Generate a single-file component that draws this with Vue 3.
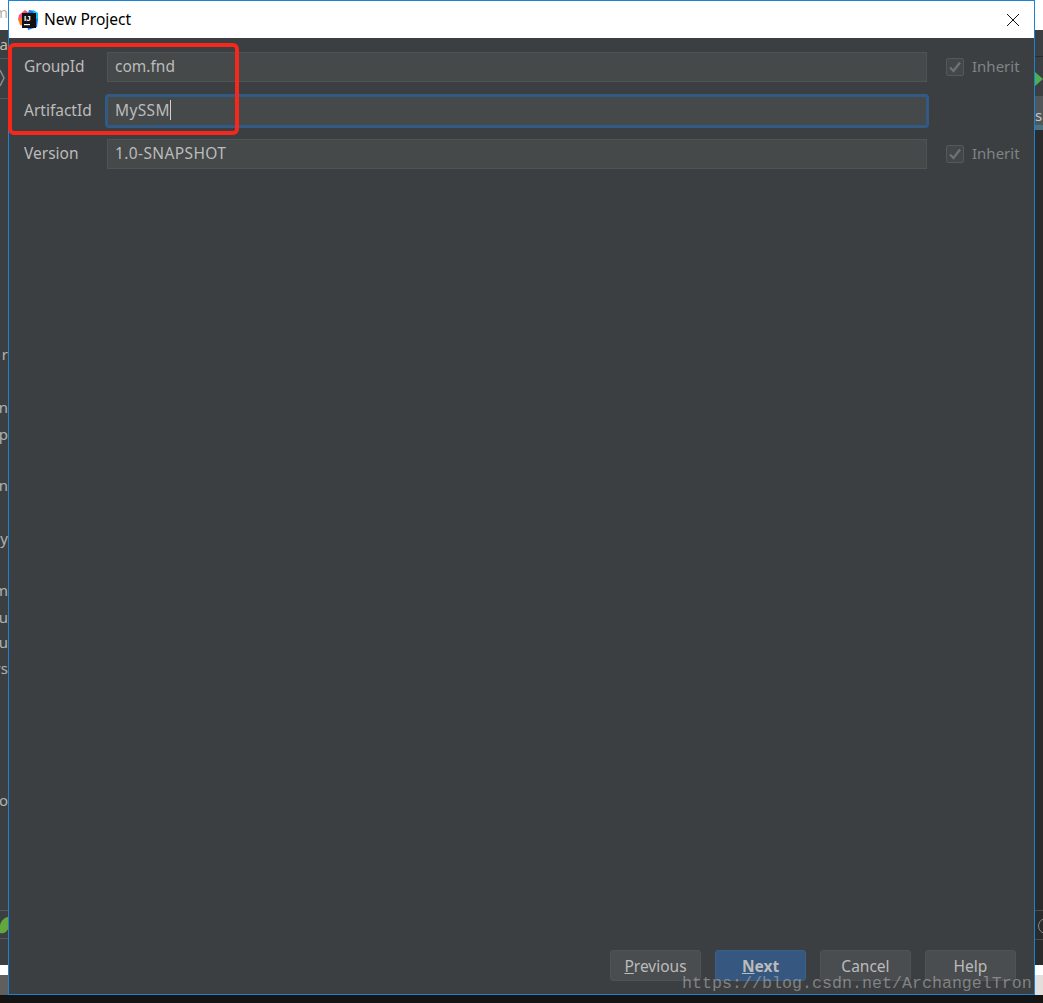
<script setup>
const leftBits = [
  { t: 'r', y: 344 }, { t: 'n', y: 397 }, { t: 'cp', y: 424 }, { t: 'n', y: 475 },
  { t: 'y', y: 528 }, { t: 'm', y: 580 }, { t: 'u', y: 607 }, { t: 'u', y: 632 },
  { t: 'rs', y: 658 }, { t: 'o', y: 790 },
]
const rows = [
  { label: 'GroupId', value: 'com.fnd', inherit: true },
  { label: 'ArtifactId', value: 'MySSM', focus: true, caps: true },
  { label: 'Version', value: '1.0-SNAPSHOT', inherit: true, caps: true },
]
</script>

<template>
  <div class="desk">
    <div class="bg-left">
      <div class="white-top"><span class="peek-m">m</span></div>
      <span class="bit peek-a">a</span>
      <div class="line l1"></div>
      <svg class="chev" width="8" height="20" viewBox="0 0 8 20"><path d="M0 2 L4 10 L0 18" fill="none" stroke="#8a8d8f" stroke-width="1.5"/></svg>
      <div class="line l2"></div>
      <span v-for="b in leftBits" :key="b.y" class="bit" :style="{ top: b.y + 'px' }">{{ b.t }}</span>
      <div class="line l3"></div>
      <svg class="leaf" width="8" height="18" viewBox="0 0 8 18"><path d="M0 16 C-2 6 3 1 8 0 L8 12 C6 16 3 17 0 16Z" fill="#62a83c"/></svg>
      <div class="line l4"></div>
      <div class="white-low"></div>
      <div class="gray-low"></div>
    </div>

    <div class="bg-right">
      <div class="white-top"></div>
      <div class="line r1"></div>
      <svg class="run" width="8" height="14" viewBox="0 0 8 14"><path d="M0 0 L8 7 L0 14Z" fill="#4caf50"/></svg>
      <div class="tab"><span class="tab-s">s</span></div>
      <div class="tab-bar"></div>
      <div class="line r2"></div>
      <div class="circle"></div>
      <div class="line r3"></div>
      <div class="white-low"></div>
      <div class="gray-low"></div>
    </div>

    <div class="dialog">
      <header class="titlebar">
        <svg class="logo" width="20" height="20" viewBox="0 0 20 20">
          <path d="M1 5 L7 0 L11 3 L5 12 L0 10Z" fill="#fc4f7c"/>
          <path d="M0 9 L6 8 L6 16 L2 15Z" fill="#f97a12"/>
          <path d="M11 0 L17 1 L20 9 L19 17 L10 20 L8 10Z" fill="#087cfa"/>
          <path d="M15 0 L20 3 L20 9 L15 8Z" fill="#07c3f2"/>
          <rect x="4" y="3" width="14" height="15" fill="#111"/>
          <text x="6" y="11" class="logo-t">IJ</text>
          <rect x="6" y="14" width="6" height="1.2" fill="#fff"/>
        </svg>
        <span class="title">New Project</span>
        <svg class="close" width="14" height="14" viewBox="0 0 14 14"><path d="M1 1 L13 13 M13 1 L1 13" stroke="#111" stroke-width="1" fill="none"/></svg>
      </header>

      <main class="body">
        <div class="form">
          <template v-for="r in rows" :key="r.label">
            <label class="lbl">{{ r.label }}</label>
            <div class="field" :class="{ focus: r.focus, caps: r.caps }">
              <span>{{ r.value }}</span><i v-if="r.focus" class="caret"></i>
            </div>
            <div v-if="r.inherit" class="inherit">
              <span class="box">
                <svg width="14" height="14" viewBox="0 0 14 14"><path d="M2 7.5 L5.5 11 L12 2.5" fill="none" stroke="#6e7173" stroke-width="2.4"/></svg>
              </span>
              <span>Inherit</span>
            </div>
            <div v-else></div>
          </template>
        </div>

        <footer class="buttons">
          <button class="btn"><u>P</u>revious</button>
          <button class="btn primary"><u>N</u>ext</button>
          <button class="btn">Cancel</button>
          <button class="btn">Help</button>
        </footer>
      </main>
    </div>

    <div class="annotation"></div>
    <div class="watermark">https://blog.csdn.net/ArchangelTron</div>
  </div>
</template>

<style>
html, body { margin: 0; background: #141414; }
</style>

<style scoped>
.desk {
  position: relative;
  width: 1043px;
  height: 1003px;
  overflow: hidden;
  background: #141414;
  font-family: "Noto Sans", "Open Sans", sans-serif;
}
.bg-left, .bg-right {
  position: absolute;
  top: 0;
  height: 995px;
  overflow: hidden;
  background: #3c3f41;
}
.bg-left { left: 0; width: 8px; }
.bg-right { left: 1035px; width: 8px; background: #2b2b2b; }
.white-top { position: absolute; left: 0; right: 0; top: 0; height: 30px; background: #fff; }
.peek-m { position: absolute; right: 0; top: 2px; color: #b9b4a8; font-size: 15px; line-height: 20px; }
.bit {
  position: absolute;
  right: 0;
  color: #b0b3b5;
  font-size: 15px;
  line-height: 20px;
}
.peek-a { top: 34px; color: #c4bda6; }
.line { position: absolute; left: 0; right: 0; height: 1px; background: #55585a; }
.l1 { top: 58px; } .l2 { top: 98px; } .l3 { top: 910px; } .l4 { top: 938px; }
.chev { position: absolute; left: 0; top: 68px; }
.leaf { position: absolute; left: 0; top: 917px; }
.white-low { position: absolute; left: 0; right: 0; top: 965px; height: 10px; background: #fff; }
.gray-low { position: absolute; left: 0; right: 0; top: 975px; height: 20px; background: #5f5f5f; }
.bg-right .gray-low { background: #e2dedc; }
.bg-right::before {
  content: "";
  position: absolute;
  left: 0; right: 0; top: 30px; height: 66px;
  background: #3c3f41;
}
.r1 { top: 56px; background: #2b2b2b; }
.run { position: absolute; left: 0; top: 72px; }
.tab { position: absolute; left: 0; right: 0; top: 96px; height: 29px; background: #515658; }
.tab-s { position: absolute; left: 0; top: 9px; color: #c8c8c8; font-size: 15px; line-height: 20px; }
.tab-bar { position: absolute; left: 0; right: 0; top: 125px; height: 5px; background: #4a7485; }
.r2 { top: 910px; background: #4a4c4e; }
.r3 { top: 939px; background: #4a4c4e; }
.circle {
  position: absolute;
  left: 3px; top: 918px;
  width: 14px; height: 14px;
  border: 1px solid #8a8a8a;
  border-radius: 50%;
}

.dialog {
  position: absolute;
  left: 8px;
  top: 0;
  width: 1025px;
  height: 993px;
  display: flex;
  flex-direction: column;
  border: 1px solid #1883d7;
  background: #3c3f41;
}
.titlebar {
  flex: none;
  height: 37px;
  display: flex;
  align-items: center;
  background: #fff;
  padding: 0 14px 0 9px;
}
.logo { flex: none; margin-right: 6px; }
.logo-t { font: 700 8px "Liberation Sans", sans-serif; fill: #fff; }
.title { flex: 1; font-size: 15.5px; color: #000; line-height: 20px; padding-bottom: 2px; }
.close { flex: none; }

.body {
  flex: 1;
  display: flex;
  flex-direction: column;
  padding: 14px 15px 13px;
}
.form {
  display: grid;
  grid-template-columns: 83px 820px 1fr;
  grid-template-rows: 30px 31px 30px;
  row-gap: 13px;
  align-items: center;
}
.lbl { font-size: 15.5px; color: #bbbbbb; line-height: 20px; padding-bottom: 2px; }
.field {
  height: 30px;
  box-sizing: border-box;
  align-self: end;
  display: flex;
  align-items: center;
  padding: 0 0 2px 7px;
  background: #45494a;
  border: 1px solid #505354;
  font-size: 15.5px;
  color: #bbbbbb;
}
.field.caps { letter-spacing: 0.38px; }
.field.focus {
  border-color: #2f5a85;
  box-shadow: 0 0 0 2px #335a82;
  border-radius: 2px;
}
.caret { display: inline-block; width: 1px; height: 20px; background: #cfcfcf; }
.inherit {
  display: flex;
  align-items: center;
  gap: 8px;
  padding-left: 19px;
  font-size: 15px;
  color: #808486;
}
.inherit span:last-child { padding-bottom: 2px; }
.box {
  width: 18px; height: 18px;
  box-sizing: border-box;
  display: flex;
  align-items: center;
  justify-content: center;
  background: #44474a;
  border: 1px solid #55585a;
  border-radius: 2px;
}
.buttons {
  margin-top: auto;
  display: flex;
  justify-content: flex-end;
  gap: 14px;
  padding-right: 3px;
}
.btn {
  width: 91px;
  height: 31px;
  padding: 2px 0 0;
  box-sizing: border-box;
  background: #4a4d4f;
  border: 1px solid #505355;
  border-radius: 3px;
  color: #bbbbbb;
  font-family: inherit;
  font-size: 15.5px;
  line-height: 1;
}
.primary {
  background: #365880;
  border-color: #3c5f86;
  font-weight: 700;
}

.annotation {
  position: absolute;
  left: 8px;
  top: 43px;
  width: 223px;
  height: 84px;
  border: 4px solid #f6281c;
  border-radius: 6px;
  pointer-events: none;
}
.watermark {
  position: absolute;
  left: 682px;
  top: 974px;
  font-family: "Liberation Mono", monospace;
  font-size: 16.67px;
  line-height: 20px;
  white-space: nowrap;
  color: rgba(175, 175, 175, 0.6);
}
</style>
